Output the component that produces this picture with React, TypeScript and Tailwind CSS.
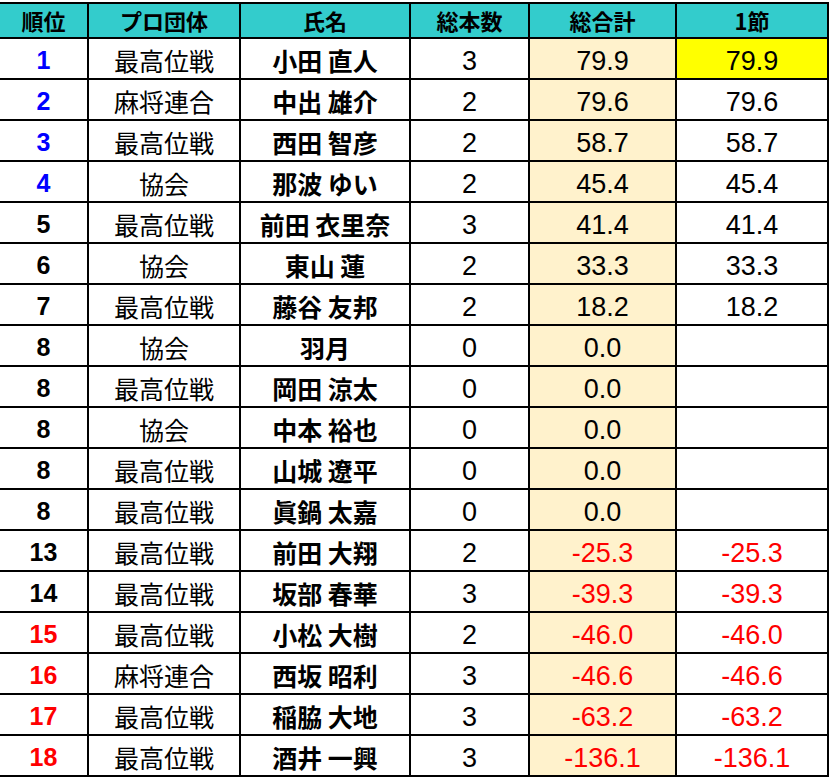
import React from "react";

type Row = {
  rank: number;
  org: string;
  name: string;
  count: number;
  total: string;
  first: string;
};

const rows: Row[] = [
  { rank: 1, org: "最高位戦", name: "小田 直人", count: 3, total: "79.9", first: "79.9" },
  { rank: 2, org: "麻将連合", name: "中出 雄介", count: 2, total: "79.6", first: "79.6" },
  { rank: 3, org: "最高位戦", name: "西田 智彦", count: 2, total: "58.7", first: "58.7" },
  { rank: 4, org: "協会", name: "那波 ゆい", count: 2, total: "45.4", first: "45.4" },
  { rank: 5, org: "最高位戦", name: "前田 衣里奈", count: 3, total: "41.4", first: "41.4" },
  { rank: 6, org: "協会", name: "東山 蓮", count: 2, total: "33.3", first: "33.3" },
  { rank: 7, org: "最高位戦", name: "藤谷 友邦", count: 2, total: "18.2", first: "18.2" },
  { rank: 8, org: "協会", name: "羽月", count: 0, total: "0.0", first: "" },
  { rank: 8, org: "最高位戦", name: "岡田 涼太", count: 0, total: "0.0", first: "" },
  { rank: 8, org: "協会", name: "中本 裕也", count: 0, total: "0.0", first: "" },
  { rank: 8, org: "最高位戦", name: "山城 遼平", count: 0, total: "0.0", first: "" },
  { rank: 8, org: "最高位戦", name: "眞鍋 太嘉", count: 0, total: "0.0", first: "" },
  { rank: 13, org: "最高位戦", name: "前田 大翔", count: 2, total: "-25.3", first: "-25.3" },
  { rank: 14, org: "最高位戦", name: "坂部 春華", count: 3, total: "-39.3", first: "-39.3" },
  { rank: 15, org: "最高位戦", name: "小松 大樹", count: 2, total: "-46.0", first: "-46.0" },
  { rank: 16, org: "麻将連合", name: "西坂 昭利", count: 3, total: "-46.6", first: "-46.6" },
  { rank: 17, org: "最高位戦", name: "稲脇 大地", count: 3, total: "-63.2", first: "-63.2" },
  { rank: 18, org: "最高位戦", name: "酒井 一興", count: 3, total: "-136.1", first: "-136.1" },
];

const jp = "font-['Noto_Sans_CJK_JP',sans-serif]";
const num = "font-['Liberation_Sans','Noto_Sans_CJK_JP',sans-serif]";
const cell = "flex items-center justify-center border-r-2 border-black";

function rankColor(r: number) {
  if (r <= 4) return "text-[#0000ff]";
  if (r >= 15) return "text-[#ff0000]";
  return "text-black";
}

export default function App() {
  return (
    <div className="w-[831px] h-[783px] bg-white overflow-hidden pt-[2px]">
      <div className="w-[829px] border-t-2 border-black">
        <div className={`flex h-[35px] bg-[#33cccc] border-b-2 border-black text-[22px] font-bold text-black ${jp}`}>
          <div className={`${cell} w-[89px]`}>順位</div>
          <div className={`${cell} w-[152px]`}>プロ団体</div>
          <div className={`${cell} w-[170px]`}>氏名</div>
          <div className={`${cell} w-[119px]`}>総本数</div>
          <div className={`${cell} w-[147px]`}>総合計</div>
          <div className={`${cell} w-[152px]`}>1節</div>
        </div>
        {rows.map((r, i) => {
          const neg = r.total.startsWith("-");
          return (
            <div key={i} className="flex h-[41px] border-b-2 border-black text-black">
              <div className={`${cell} w-[89px] pt-[5px] text-[25px] font-bold ${num} ${rankColor(r.rank)}`}>{r.rank}</div>
              <div className={`${cell} w-[152px] pt-[4px] text-[25px] ${jp}`}>{r.org}</div>
              <div className={`${cell} w-[170px] pt-[4px] text-[25px] font-bold ${jp}`}>{r.name}</div>
              <div className={`${cell} w-[119px] pt-[5px] text-[27px] ${num}`}>{r.count}</div>
              <div className={`${cell} w-[147px] pt-[5px] bg-[#fff2cc] text-[27px] ${num} ${neg ? "text-[#ff0000]" : ""}`}>{r.total}</div>
              <div className={`${cell} w-[152px] pt-[5px] text-[27px] ${num} ${neg ? "text-[#ff0000]" : ""} ${i === 0 ? "bg-[#ffff00]" : ""}`}>{r.first}</div>
            </div>
          );
        })}
      </div>
    </div>
  );
}
